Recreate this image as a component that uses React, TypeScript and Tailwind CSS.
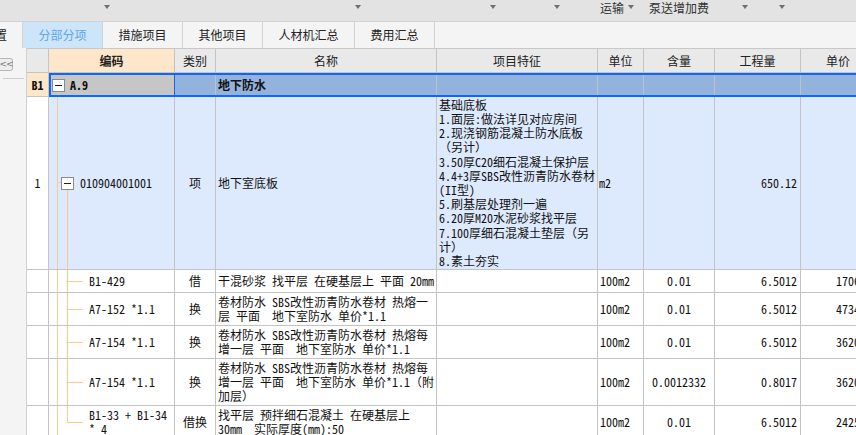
type Row = {
  h: string;
  code: string[];
  type: string;
  name: string[];
  unit: string;
  qty: string;
  amt: string;
  price: string;
  last?: boolean;
};

const W = {
  num: "w-[22px]",
  code: "w-[126px]",
  type: "w-[41px]",
  name: "w-[221px]",
  feat: "w-[161px]",
  unit: "w-[46px]",
  qty: "w-[71px]",
  amt: "w-[86px]",
  price: "w-[75px]",
};

const mono = "font-['Noto_Sans_Mono_CJK_SC','Noto_Sans_CJK_SC',monospace]";
const sans = "font-['Noto_Sans_CJK_SC',sans-serif]";

const features = [
  "基础底板",
  "1.面层:做法详见对应房间",
  "2.现浇钢筋混凝土防水底板",
  "（另计）",
  "3.50厚C20细石混凝土保护层",
  "4.4+3厚SBS改性沥青防水卷材",
  "(II型)",
  "5.刷基层处理剂一遍",
  "6.20厚M20水泥砂浆找平层",
  "7.100厚细石混凝土垫层（另",
  "计）",
  "8.素土夯实",
];

const rows: Row[] = [
  { h: "h-[23px]", code: ["B1-429"], type: "借", name: ["干混砂浆 找平层 在硬基层上 平面 20mm"], unit: "100m2", qty: "0.01", amt: "6.5012", price: "1706.3" },
  { h: "h-[33px]", code: ["A7-152 *1.1"], type: "换", name: ["卷材防水 SBS改性沥青防水卷材 热熔一", "层 平面  地下室防水 单价*1.1"], unit: "100m2", qty: "0.01", amt: "6.5012", price: "4734.2" },
  { h: "h-[33px]", code: ["A7-154 *1.1"], type: "换", name: ["卷材防水 SBS改性沥青防水卷材 热熔每", "增一层 平面  地下室防水 单价*1.1"], unit: "100m2", qty: "0.01", amt: "6.5012", price: "3620.5" },
  { h: "h-[47px]", code: ["A7-154 *1.1"], type: "换", name: ["卷材防水 SBS改性沥青防水卷材 热熔每", "增一层 平面  地下室防水 单价*1.1（附", "加层）"], unit: "100m2", qty: "0.0012332", amt: "0.8017", price: "3620.5" },
  { h: "h-[33px]", code: ["B1-33 + B1-34", "* 4"], type: "借换", name: ["找平层 预拌细石混凝土 在硬基层上", "30mm  实际厚度(mm):50"], unit: "100m2", qty: "0.01", amt: "6.5012", price: "2425.8", last: true },
];

function Cell({ w, className = "", children }: { w: string; className?: string; children?: React.ReactNode }) {
  return (
    <div className={`${w} shrink-0 h-full border-r border-b border-[#c4c4c4] flex items-center overflow-hidden ${className}`}>
      {children}
    </div>
  );
}

function Lines({ lines }: { lines: string[] }) {
  return (
    <div className="leading-[14.2px]">
      {lines.map((l, i) => (
        <div key={i} className="whitespace-pre">
          {l}
        </div>
      ))}
    </div>
  );
}

function MinusBox() {
  return (
    <span className="relative z-10 w-[13px] h-[13px] shrink-0 border border-[#8a8a8a] bg-white flex items-center justify-center">
      <span className="w-[7px] h-[1px] bg-[#222]" />
    </span>
  );
}

function Toolbar() {
  const tri = "w-0 h-0 border-x-[3px] border-x-transparent border-t-[4px] border-t-[#6f6f6f] mt-[5px]";
  return (
    <div className={`h-[22px] bg-[#e3e3e3] border-b border-[#d2d2d2] flex items-start text-[12px] text-[#333] ${sans}`}>
      <span className={`${tri} ml-[104px]`} />
      <span className={`${tri} ml-[245px]`} />
      <span className={`${tri} ml-[129px]`} />
      <span className={`${tri} ml-[58px]`} />
      <span className="ml-[40px] leading-[16px]">运输</span>
      <span className={`${tri} ml-[4px]`} />
      <span className="ml-[15px] leading-[16px]">泵送增加费</span>
      <span className={`${tri} ml-[33px]`} />
      <span className={`${tri} ml-[31px]`} />
    </div>
  );
}

function Tabs() {
  const tabs = ["措施项目", "其他项目", "人材机汇总", "费用汇总"];
  const widths = ["w-[80px]", "w-[80px]", "w-[92px]", "w-[80px]"];
  return (
    <div className={`h-[26px] bg-[#f4f4f4] flex text-[12px] text-[#222] ${sans}`}>
      <div className="w-[23px] shrink-0 border-r border-[#d3d3d3] flex items-center overflow-hidden">
        <span className="ml-[-5px]">置</span>
      </div>
      <div className="w-[80px] shrink-0 bg-[#cce5f8] border-r border-[#d3d3d3] flex items-center justify-center text-[#5ea6ee]">
        分部分项
      </div>
      {tabs.map((t, i) => (
        <div key={t} className={`${widths[i]} shrink-0 border-r border-[#d3d3d3] flex items-center justify-center`}>
          {t}
        </div>
      ))}
    </div>
  );
}

function Sidebar() {
  return (
    <div className="w-[27px] shrink-0 bg-[#f4f4f4] border-r border-[#d0d0d0] pt-[10px]">
      <div className="w-[13px] h-[13px] border border-l-0 border-[#b8b8b8] rounded-r-[3px] bg-[#ededed] flex items-center justify-center text-[9px] leading-none text-[#777] font-['DejaVu_Sans',sans-serif] tracking-[-1px]">
        &lt;&lt;
      </div>
      <div className="mt-[7px] ml-[3px] w-[21px] h-[1px] bg-[#cfcfcf]" />
    </div>
  );
}

function Header() {
  const hc = "bg-[#e9e9e9] justify-center";
  return (
    <div className={`flex h-[24px] text-[12px] text-[#222] ${sans}`}>
      <Cell w={W.num} className={hc} />
      <Cell w={W.code} className="bg-[#fde6ca] justify-center font-bold">编码</Cell>
      <Cell w={W.type} className={hc}>类别</Cell>
      <Cell w={W.name} className={hc}>名称</Cell>
      <Cell w={W.feat} className={hc}>项目特征</Cell>
      <Cell w={W.unit} className={hc}>单位</Cell>
      <Cell w={W.qty} className={hc}>含量</Cell>
      <Cell w={W.amt} className={hc}>工程量</Cell>
      <Cell w={W.price} className={hc}>单价</Cell>
    </div>
  );
}

function GroupRow() {
  const c = "shrink-0 h-full border-r border-[#b9c2cf] flex items-center";
  return (
    <div className="flex h-[24px] text-[12px] text-[#111]">
      <Cell w={W.num} className={`bg-[#fde6ca] justify-center font-bold ${mono}`}>B1</Cell>
      <div className="flex h-full border-y-2 border-[#0c68f5] bg-[#93b3dd]">
        <div className={`${W.code} ${c} relative border-x-2 border-x-[#0c68f5] bg-[#c6c6c6] pl-[1px] ${mono}`}>
          <MinusBox />
          <span className="ml-[5px] font-bold">A.9</span>
          <span className="absolute left-[7px] top-[16px] bottom-0 w-[1px] bg-[#fcc98b]" />
        </div>
        <div className={`${W.type} ${c}`} />
        <div className={`${W.name} ${c} pl-[2px] font-bold ${sans}`}>地下防水</div>
        <div className={`${W.feat} ${c}`} />
        <div className={`${W.unit} ${c}`} />
        <div className={`${W.qty} ${c}`} />
        <div className={`${W.amt} ${c}`} />
        <div className={`${W.price} ${c}`} />
      </div>
    </div>
  );
}

function ItemRow() {
  const bg = "bg-[#dde9fc]";
  return (
    <div className={`flex h-[173px] text-[12px] text-[#111] ${mono}`}>
      <Cell w={W.num} className="bg-white justify-center">1</Cell>
      <Cell w={W.code} className={`${bg} relative`}>
        <span className="absolute left-[8px] top-0 bottom-0 w-[1px] bg-[#fcc98b]" />
        <span className="absolute left-[8px] top-[85px] w-[4px] h-[1px] bg-[#fcc98b]" />
        <span className="absolute left-[18px] top-[92px] bottom-0 w-[1px] bg-[#fcc98b]" />
        <span className="ml-[12px]"><MinusBox /></span>
        <span className="ml-[6px]">010904001001</span>
      </Cell>
      <Cell w={W.type} className={`${bg} justify-center`}>项</Cell>
      <Cell w={W.name} className={`${bg} pl-[2px]`}>地下室底板</Cell>
      <Cell w={W.feat} className={`${bg} pl-[2px]`}>
        <Lines lines={features} />
      </Cell>
      <Cell w={W.unit} className={`${bg} pl-[1px]`}>m2</Cell>
      <Cell w={W.qty} className={bg} />
      <Cell w={W.amt} className={`${bg} justify-end pr-[3px]`}>650.12</Cell>
      <Cell w={W.price} className={bg} />
    </div>
  );
}

function SubRow({ r }: { r: Row }) {
  return (
    <div className={`flex ${r.h} text-[12px] text-[#111] ${mono}`}>
      <Cell w={W.num} className="bg-white" />
      <Cell w={W.code} className="bg-white relative">
        <span className="absolute left-[8px] top-0 bottom-0 w-[1px] bg-[#fcc98b]" />
        <span className={`absolute left-[18px] top-0 w-[1px] bg-[#fcc98b] ${r.last ? "h-1/2" : "bottom-0"}`} />
        <span className="absolute left-[18px] top-1/2 w-[16px] h-[1px] bg-[#fcc98b]" />
        <div className="ml-[40px]">
          <Lines lines={r.code} />
        </div>
      </Cell>
      <Cell w={W.type} className={`bg-white justify-center ${sans}`}>{r.type}</Cell>
      <Cell w={W.name} className="bg-white pl-[2px]">
        <Lines lines={r.name} />
      </Cell>
      <Cell w={W.feat} className="bg-white" />
      <Cell w={W.unit} className="bg-white pl-[2px]">{r.unit}</Cell>
      <Cell w={W.qty} className="bg-white justify-center">{r.qty}</Cell>
      <Cell w={W.amt} className="bg-white justify-end pr-[3px]">{r.amt}</Cell>
      <Cell w={W.price} className="bg-white justify-end pr-[3px]">{r.price}</Cell>
    </div>
  );
}

export default function App() {
  return (
    <div className="w-[856px] h-[435px] overflow-hidden bg-white">
      <Toolbar />
      <Tabs />
      <div className="flex h-[387px]">
        <Sidebar />
        <div className="flex-1 overflow-hidden border-t border-[#c8c8c8]">
          <div className="w-[848px]">
            <Header />
            <GroupRow />
            <ItemRow />
            {rows.map((r, i) => (
              <SubRow key={i} r={r} />
            ))}
          </div>
        </div>
      </div>
    </div>
  );
}
